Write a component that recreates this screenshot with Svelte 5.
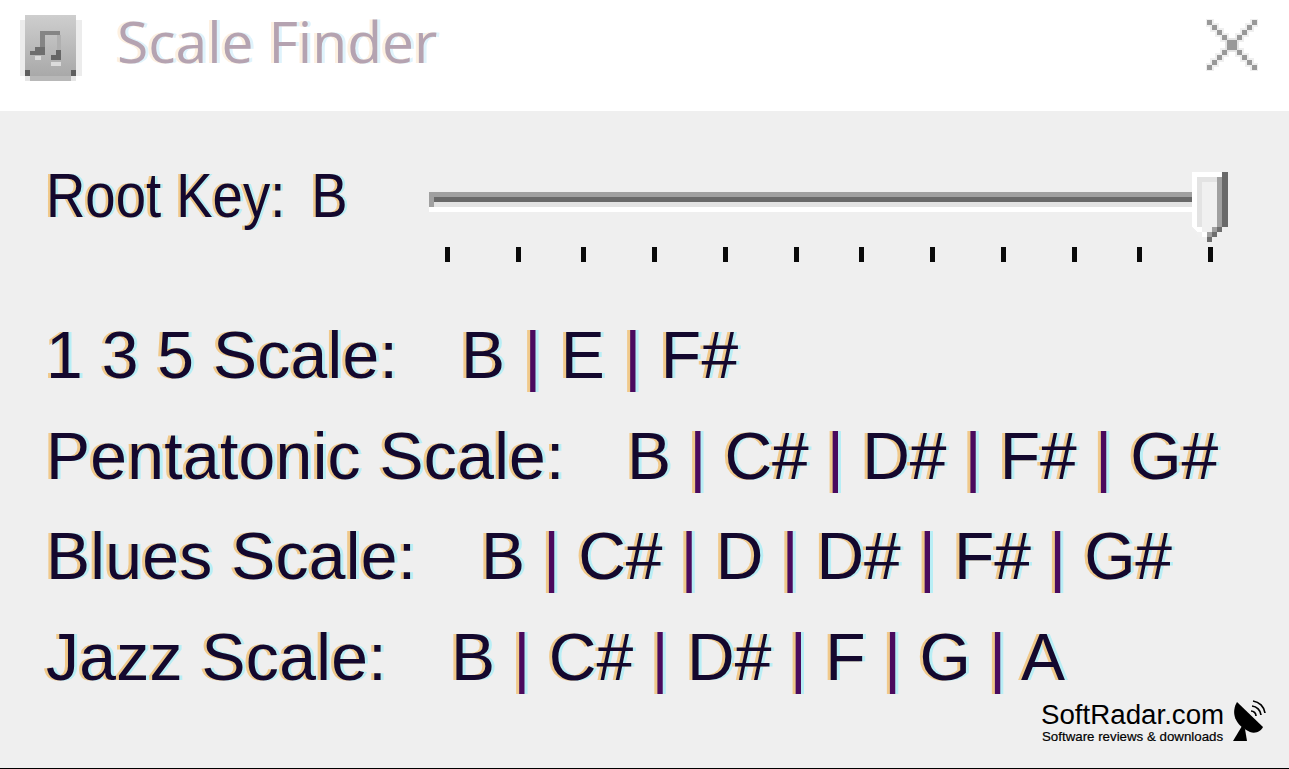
<script>
  const tickGaps = [0, 66, 60, 66, 66, 66, 60, 66, 66, 66, 60, 66];
  const closeSteps = [5, 10, 15, 20];
  const closeSigns = [[1, 1], [1, -1], [-1, 1], [-1, -1]];
  const sepText = ' | ';
  const rows = [
    { cls: 'r1', label: '1 3 5 Scale:', notes: ['B', 'E', 'F#'] },
    { cls: 'r2', label: 'Pentatonic Scale:', notes: ['B', 'C#', 'D#', 'F#', 'G#'] },
    { cls: 'r3', label: 'Blues Scale:', notes: ['B', 'C#', 'D', 'D#', 'F#', 'G#'] },
    { cls: 'r4', label: 'Jazz Scale:', notes: ['B', 'C#', 'D#', 'F', 'G', 'A'] }
  ];
</script>

<div class="win">
  <header class="title">
    <svg class="appicon" width="62" height="66" viewBox="0 0 62 66" shape-rendering="crispEdges">
      <defs>
        <linearGradient id="ig" x1="0" y1="0" x2="0" y2="1">
          <stop offset="0" stop-color="#cecece" />
          <stop offset="1" stop-color="#a9a9a9" />
        </linearGradient>
      </defs>
      <rect x="0" y="5" width="62" height="56" fill="#ececec" />
      <rect x="5" y="0" width="51" height="66" fill="#e6e6e6" />
      <rect x="5" y="0" width="51" height="61" fill="url(#ig)" />
      <rect x="10" y="61" width="41" height="5" fill="#b8b8b8" />
      <rect x="5" y="55" width="5" height="6" fill="#5f5f5f" />
      <rect x="51" y="55" width="5" height="6" fill="#5f5f5f" />
      <path d="M20 16h20v4H25v12h-5z" fill="#858585" />
      <rect x="37" y="20" width="4" height="15" fill="#b0b0b0" />
      <path d="M15 32h10v8H10v-4h5z" fill="#6e6e6e" />
      <path d="M36 35h5v10H31v-5h5z" fill="#666" />
      <rect x="15" y="41" width="6" height="4" fill="#dcdcdc" />
      <rect x="31" y="47" width="10" height="4" fill="#dcdcdc" />
    </svg>
    <span class="titletext">Scale Finder</span>
    <svg class="close" width="52" height="52" viewBox="-26 -26 52 52" shape-rendering="crispEdges">
      {#each closeSigns as [sx, sy]}
        {#each closeSteps as s}
          <rect x={sx * (s + 2.5) - 4.5} y={sy * (s + 2.5) - 4.5} width="9" height="9" fill="#efefef" />
        {/each}
      {/each}
      <rect x="-7" y="-7" width="14" height="14" fill="#e4e4e4" />
      <rect x="-5" y="-5" width="10" height="10" fill="#999" />
      {#each closeSigns as [sx, sy]}
        {#each closeSteps as s}
          <rect x={sx * (s + 2.5) - 2.5} y={sy * (s + 2.5) - 2.5} width="5" height="5" fill="#999" />
        {/each}
      {/each}
    </svg>
  </header>

  <main class="body">
    <section class="rootrow">
      <div class="rootlabel">Root Key:<span class="rootval">B</span></div>
      <div class="slider">
        <div class="track"></div>
        <div class="ticks">
          {#each tickGaps as g}
            <i class="tick" style="margin-left:{g}px"></i>
          {/each}
        </div>
        <svg class="thumb" width="36" height="71" viewBox="0 0 36 71" shape-rendering="crispEdges">
          <path d="M0 0h30v55H25l-15 15L0 55z" fill="#f0f0f0" />
          <path d="M5 5h25v5H10v45H5z" fill="#e3e3e3" />
          <path d="M0 0h30v5H5v50H0zM0 55h10v5H5zM10 60h5v5h-5z" fill="#fff" />
          <rect x="25" y="5" width="5" height="50" fill="#a0a0a0" />
          <rect x="30" y="0" width="6" height="55" fill="#696969" />
          <path d="M25 55h5v5h-5zM20 60h5v5h-5zM15 65h5v5h-5z" fill="#6e6e6e" />
          <path d="M20 55h5v5h-5zM15 60h5v5h-5z" fill="#a0a0a0" />
        </svg>
      </div>
    </section>

    <section class="scales">
      {#each rows as r}
        <div class="row {r.cls}">
          <span class="label">{r.label}</span>
          <span class="value">{#each r.notes as n, i}{#if i > 0}<span class="sep">{sepText}</span>{/if}{n}{/each}</span>
        </div>
      {/each}
    </section>

    <footer class="mark">
      <div class="marktext">
        <div class="brand">SoftRadar.com</div>
        <div class="tag">Software reviews &amp; downloads</div>
      </div>
      <svg class="dish" width="36" height="44" viewBox="0 0 36 44">
        <path d="M6 2 C0 12 3 25 19 32 C25 34 30 31 32 27 Z" fill="#000" />
        <path d="M11 26 L2 41 H16 L14 29 Z" fill="#000" />
        <path d="M20 11 a5 5 0 0 1 5 5 M21 6 a10 10 0 0 1 9 9 M22 1 a14 14 0 0 1 12 12" fill="none" stroke="#000" stroke-width="1.7" />
      </svg>
    </footer>
  </main>
</div>

<style>
  :global(body) { margin: 0; background: #f0f0f0; }
  .win {
    width: 1289px;
    height: 769px;
    box-sizing: border-box;
    display: flex;
    flex-direction: column;
    background: #efefef;
    border-bottom: 1px solid #000;
    overflow: hidden;
    font-family: "Liberation Sans", Arial, sans-serif;
    color: #14082e;
  }
  .title {
    height: 111px;
    flex: none;
    background: #fff;
    display: flex;
    align-items: flex-start;
    padding: 15px 31px 0 20px;
    box-sizing: border-box;
  }
  .appicon { flex: none; }
  .titletext {
    margin-left: 35px;
    margin-top: -14px;
    font-family: "Open Sans", "Noto Sans", sans-serif;
    font-size: 57px;
    line-height: 80px;
    color: #b5a3b1;
    text-shadow: -3px 0 #fdf0e0, 3px 0 #dff3fc;
  }
  .close { margin-left: auto; margin-top: 4px; flex: none; }
  .body { flex: 1; position: relative; padding: 45px 0 0 46px; }
  .rootrow { display: flex; align-items: flex-start; height: 118px; }
  .rootlabel {
    width: 383px;
    flex: none;
    font-size: 63px;
    line-height: 78px;
    white-space: pre;
    transform: scaleX(.865);
    transform-origin: left;
    text-shadow: -3px 0 #f0c98a, 3px 0 #b8eef5;
  }
  .rootval { margin-left: 30px; }
  .slider { position: relative; width: 800px; height: 118px; }
  .track {
    margin-top: 36px;
    width: 766px;
    height: 15px;
    box-sizing: border-box;
    background: linear-gradient(#a0a0a0 0 5px, #696969 5px 10px, #e3e3e3 10px);
    border-left: 5px solid #a0a0a0;
    box-shadow: 0 5px 0 #fff;
  }
  .ticks { display: flex; margin: 40px 0 0 16px; }
  .tick { display: block; flex: none; width: 5px; height: 15px; background: #0a0a0a; }
  .thumb { position: absolute; left: 763px; top: 16px; }
  .scales { display: flex; flex-direction: column; margin-top: 41px; }
  .row {
    display: flex;
    height: 100.7px;
    line-height: 80px;
    font-size: 66px;
    white-space: pre;
    text-shadow: -3px 0 #f0c98a, 3px 0 #b8eef5;
  }
  .label { width: 415px; flex: none; letter-spacing: .3px; }
  .r1 .value { letter-spacing: .5px; }
  .r2 .label { width: 581px; }
  .r3 .label { width: 435px; }
  .r4 .label { width: 405px; }
  .r2 .value { letter-spacing: -.1px; }
  .r3 .value { letter-spacing: -.15px; }
  .sep { color: #4a0a5e; }
  .mark {
    position: absolute;
    left: 1041px;
    top: 590px;
    display: flex;
    text-shadow: none;
    color: #000;
  }
  .marktext { width: 190px; flex: none; }
  .brand { font-size: 27.7px; line-height: 28px; }
  .tag { font-size: 13.3px; line-height: 15px; margin-left: 1px; -webkit-text-stroke: .2px #000; }
  .dish { margin-top: -1px; flex: none; }
</style>
